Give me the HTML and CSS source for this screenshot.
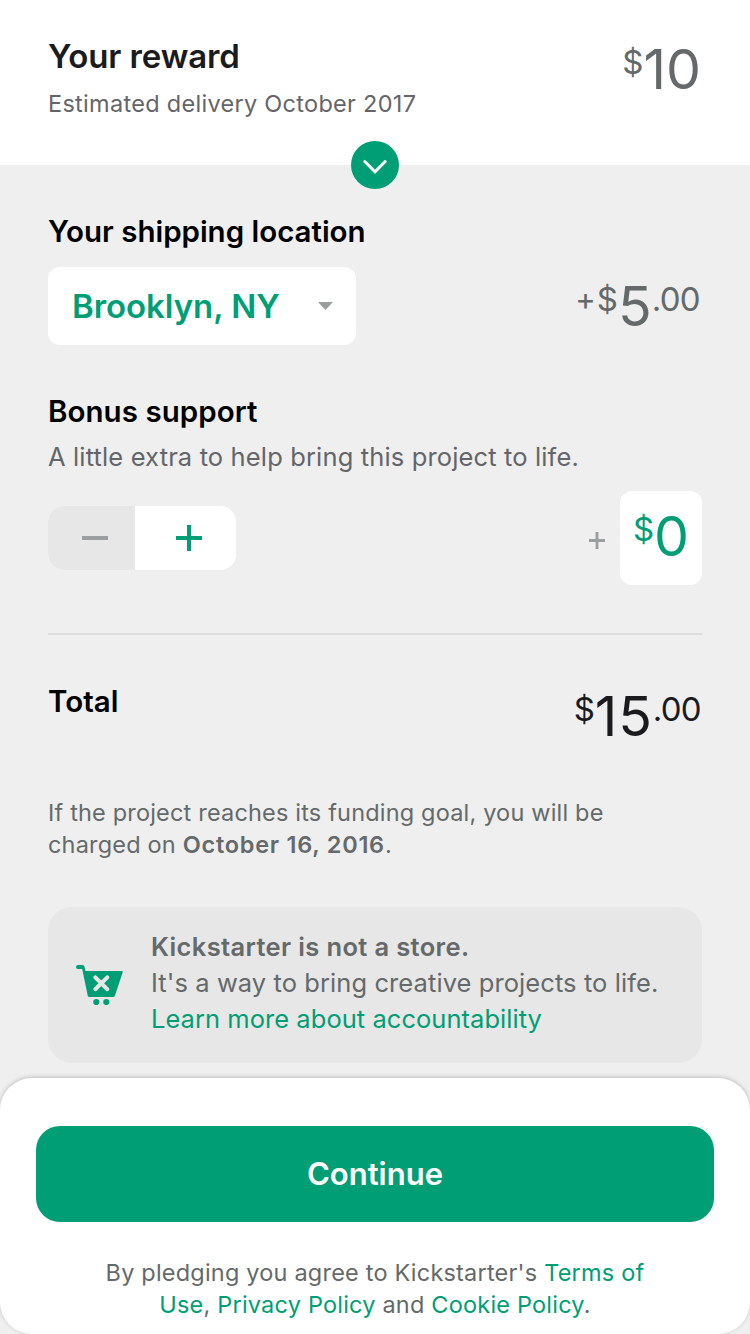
FILE: index.html
```html
<!DOCTYPE html>
<html lang="en">
<head>
<meta charset="utf-8">
<title>Pledge</title>
<link rel="stylesheet" href="styles.css">
</head>
<body>
<header class="reward">
  <div>
    <h1 class="reward-title">Your reward</h1>
    <p class="delivery">Estimated delivery October 2017</p>
  </div>
  <div class="money money-reward"><span class="sup">$</span><span class="big">10</span></div>
  <button class="expand" aria-label="Expand"><svg width="48" height="48" viewBox="0 0 48 48"><path d="M13.800 20.500 24 30.800 34.200 20.500" fill="none" stroke="#fff" stroke-width="3" stroke-linecap="round"/></svg></button>
</header>
<main class="content">
  <h2 class="heading location">Your shipping location</h2>
  <div class="row shipping">
    <button class="select"><span class="place">Brooklyn, NY</span><svg width="15" height="8" viewBox="0 0 15 8"><path d="M0 0H15L7.500 8Z" fill="#9b9e9e"/></svg></button>
    <div class="money money-shipping"><span class="sup plus-sign">+</span><span class="sup">$</span><span class="big">5</span><span class="sup cents">.00</span></div>
  </div>
  <h2 class="heading bonus">Bonus support</h2>
  <p class="hint">A little extra to help bring this project to life.</p>
  <div class="row extra">
    <div class="stepper">
      <button class="minus" aria-label="Less"><svg width="26" height="26" viewBox="0 0 26 26"><path d="M0 13H26" stroke="#9b9e9e" stroke-width="4"/></svg></button>
      <button class="plus" aria-label="More"><svg width="26" height="26" viewBox="0 0 26 26"><path d="M0 13H26M13 0V26" stroke="#009e74" stroke-width="4"/></svg></button>
    </div>
    <div class="amount">
      <svg class="amount-plus" width="16" height="17" viewBox="0 0 16 17"><path d="M0 8.500H16M8 0V17" stroke="#9b9e9e" stroke-width="2.800"/></svg>
      <div class="amount-box money"><span class="sup">$</span><span class="big">0</span></div>
    </div>
  </div>
  <div class="row total">
    <h2 class="heading">Total</h2>
    <div class="money money-total"><span class="sup">$</span><span class="big">15</span><span class="sup cents">.00</span></div>
  </div>
  <p class="notice">If the project reaches its funding goal, you will be<br>charged on <b>October 16, 2016</b>.</p>
  <section class="card">
    <svg width="47" height="40" viewBox="0 0 47 40"><path d="M2 0H6.500Q8 0 8.400 1.600L9.500 6H45.500Q47.200 6 46.600 7.600L39 30.500Q38.500 32 37 32H13.500Q12 32 11.700 30.500L6.200 4H2A2 2 0 0 1 2 0Z" fill="#009e74"/><circle cx="20.300" cy="37" r="3.100" fill="#009e74"/><circle cx="30.300" cy="37" r="3.100" fill="#009e74"/><path d="M19.300 12.400 31.300 24.200M31.300 12.400 19.300 24.200" stroke="#e7e7e7" stroke-width="4" stroke-linecap="round"/></svg>
    <p class="card-text"><b>Kickstarter is not a store.</b><br><span class="creative">It's a way to bring creative projects to life.</span><br><a>Learn more about accountability</a></p>
  </section>
</main>
<footer class="footer">
  <button class="continue">Continue</button>
  <p class="legal">By pledging you agree to Kickstarter's <a>Terms of</a><br><a>Use</a>, <a>Privacy Policy</a> and <a>Cookie Policy</a>.</p>
</footer>
</body>
</html>
```
FILE: styles.css
```css
* { box-sizing: border-box; }
body { margin: 0; height: 1334px; display: flex; flex-direction: column; overflow: hidden; background: #efefef; color: #656969; font-family: Inter, sans-serif; }
h1, h2, p { margin: 0; }
button { border: 0; padding: 0; font-family: inherit; }
svg { display: block; flex: none; }
a { color: #009e74; }
b { font-weight: 600; }
.reward { position: relative; display: flex; justify-content: space-between; height: 165px; padding: 36px 49px 0 48px; background: #fff; }
.reward-title { color: #1b1b1e; font-size: 33px; line-height: 41px; font-weight: 600; letter-spacing: -.1px; }
.delivery { margin-top: 11px; color: #656569; font-size: 23.5px; line-height: 32px; letter-spacing: .29px; }
.expand { position: absolute; left: 351px; bottom: -24px; width: 48px; height: 48px; border-radius: 50%; background: #009e74; }
.money { display: flex; align-items: flex-start; white-space: nowrap; }
.big { font-size: 55.5px; line-height: 66px; }
.sup { font-size: 33px; line-height: 52px; }
.plus-sign { margin-right: 1px; font-size: 31px; line-height: 52px; }
.cents { letter-spacing: -.7px; }
.money-shipping { padding: 6px 2px 0 0; }
.content { height: 912px; flex: none; padding: 46px 48px 0; }
.heading { color: #000; font-size: 29.5px; line-height: 40px; font-weight: 600; letter-spacing: .05px; }
.location { letter-spacing: -.02px; }
.row { display: flex; justify-content: space-between; align-items: flex-start; }
.shipping { height: 78px; margin-top: 16px; }
.select { display: flex; align-items: center; justify-content: space-between; width: 308px; height: 78px; padding: 0 23px 0 24px; border-radius: 12px; background: #fff; }
.place { color: #009e74; font-size: 33px; font-weight: 600; letter-spacing: -.05px; }
.bonus { margin-top: 46px; }
.hint { margin-top: 10px; color: #656569; font-size: 25.5px; line-height: 32px; letter-spacing: .14px; }
.extra { align-items: center; height: 94px; margin-top: 18px; }
.stepper { display: flex; width: 188px; height: 64px; border-radius: 16px; overflow: hidden; background: #fff; }
.stepper button { display: flex; align-items: center; justify-content: center; }
.minus { width: 87px; padding-left: 7px; background: #e7e7e7; }
.plus { width: 101px; padding-left: 7px; background: #fff; }
.amount { display: flex; align-items: center; gap: 15px; }
.amount-plus { margin-top: 5px; }
.amount-box { width: 82px; height: 94px; justify-content: center; padding-top: 12px; border-radius: 12px; background: #fff; color: #009e74; }
.total { height: 148px; margin-top: 48px; padding-top: 46px; border-top: 2px solid #dcdcdc; }
.money-total { padding: 2px 1px 0 0; color: #1b1b1e; }
.money-total .big { letter-spacing: .8px; }
.notice { margin-top: 16px; font-size: 23.5px; line-height: 32px; letter-spacing: .18px; }
.notice b { letter-spacing: .75px; }
.card { display: flex; align-items: center; gap: 28px; height: 156px; margin-top: 46px; padding: 0 28px; border-radius: 24px; background: #e7e7e7; }
.card-text { margin-top: -5px; font-size: 25.5px; line-height: 36px; letter-spacing: .36px; white-space: nowrap; }
.creative { letter-spacing: .08px; }
.card-text a { letter-spacing: .04px; }
.footer { height: 256px; margin-top: 1px; padding: 48px 36px 0; border-radius: 32px; background: #fff; box-shadow: 0 -1px 4px #0003; }
.continue { width: 678px; height: 96px; padding-bottom: 2px; border-radius: 24px; background: #009e74; color: #fff; font-size: 31px; font-weight: 600; }
.legal { margin-top: 35px; text-align: center; font-size: 23.5px; line-height: 32px; letter-spacing: .2px; }
```
